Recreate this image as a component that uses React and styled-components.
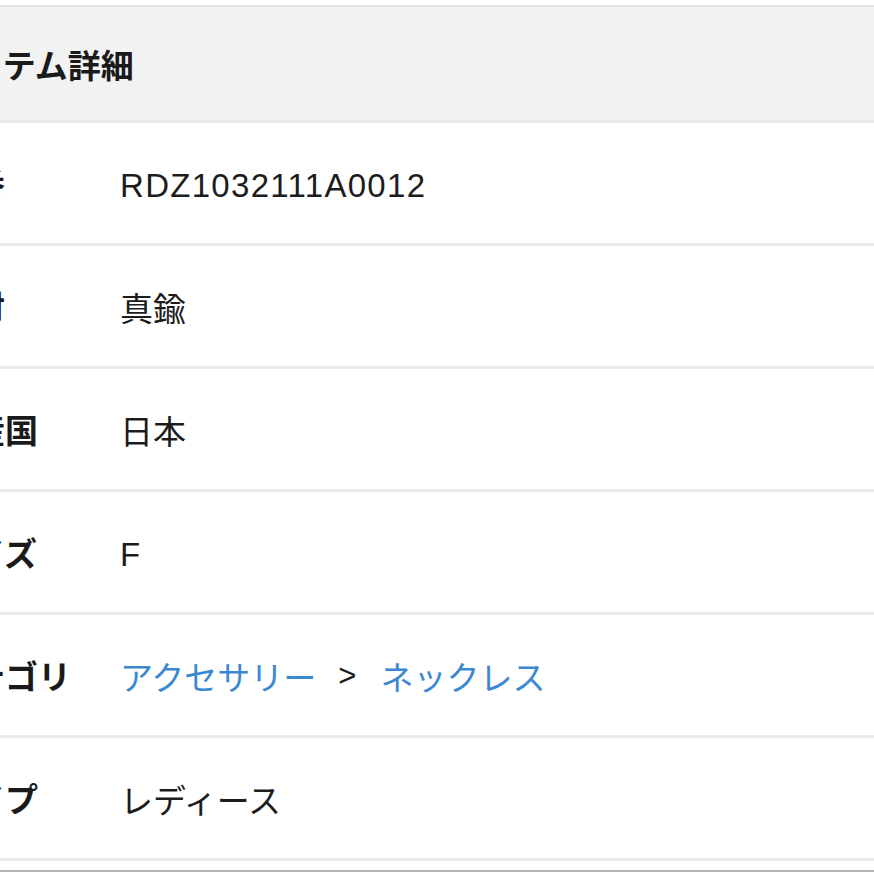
import React from 'react'
import styled, {createGlobalStyle} from 'styled-components'

const GlobalStyle = createGlobalStyle`
html, body {
  margin: 0;
  padding: 0;
  background: #ffffff;
  overflow: hidden;
}
body {
  font-family: "Liberation Sans", "Noto Sans CJK JP", sans-serif;
  color: #1c1c1c;
}
`

const rows = [
    {label: '品番', value: 'RDZ1032111A0012', latin: true},
    {label: '素材', value: '真鍮'},
    {label: '生産国', value: '日本'},
    {label: 'サイズ', value: 'F', latin: true},
    {label: 'カテゴリ', links: ['アクセサリー', 'ネックレス']},
    {label: 'タイプ', value: 'レディース'},
]

const App = () => {
    return (
        <Page>
            <GlobalStyle/>
            <Table>
                <Header>アイテム詳細</Header>
                {rows.map(row => (
                    <Row key={row.label}>
                        <Label>{row.label}</Label>
                        {row.links ? (
                            <Value>
                                <Crumb href="#">{row.links[0]}</Crumb>
                                <Arrow>&gt;</Arrow>
                                <Crumb href="#">{row.links[1]}</Crumb>
                            </Value>
                        ) : (
                            <Value latin={row.latin}>{row.value}</Value>
                        )}
                    </Row>
                ))}
            </Table>
            <Footer/>
        </Page>
    );
};

const Page = styled.div`
padding-top: 5px;
width: 874px;
height: 874px;
overflow: hidden;
`

const Table = styled.div`
margin-left: -61px;
border-top: 2px solid #e4e4e4;
`

const Header = styled.div`
height: 113px;
display: flex;
align-items: center;
background: #f2f2f2;
border-bottom: 3px solid #e9e9e9;
font-family: "Noto Sans CJK JP", sans-serif;
font-weight: 700;
font-size: 33px;
color: #1a1a1a;
white-space: nowrap;
`

const Row = styled.div`
display: grid;
grid-template-columns: 181px 1fr;
align-items: center;
height: 120px;
border-bottom: 3px solid #ebebeb;
`

const Label = styled.div`
font-family: "Noto Sans CJK JP", sans-serif;
font-weight: 700;
font-size: 33px;
color: #1a1a1a;
white-space: nowrap;
`

const Value = styled.div`
display: flex;
align-items: center;
padding-top: ${p => p.latin ? '5px' : '2px'};
font-family: ${p => p.latin ? '"Liberation Sans", "Noto Sans CJK JP", sans-serif' : '"Noto Sans CJK JP", sans-serif'};
font-size: 33px;
letter-spacing: ${p => p.latin ? '1.3px' : '0'};
color: #1c1c1c;
white-space: nowrap;
`

const Crumb = styled.a`
color: #3b88d2;
text-decoration: none;
`

const Arrow = styled.span`
font-family: "Liberation Sans", sans-serif;
font-size: 31px;
color: #1c1c1c;
margin: 0 24px 0 22px;
`

const Footer = styled.div`
margin-top: 9px;
border-top: 2px solid #b3b3b3;
`

export default App;
